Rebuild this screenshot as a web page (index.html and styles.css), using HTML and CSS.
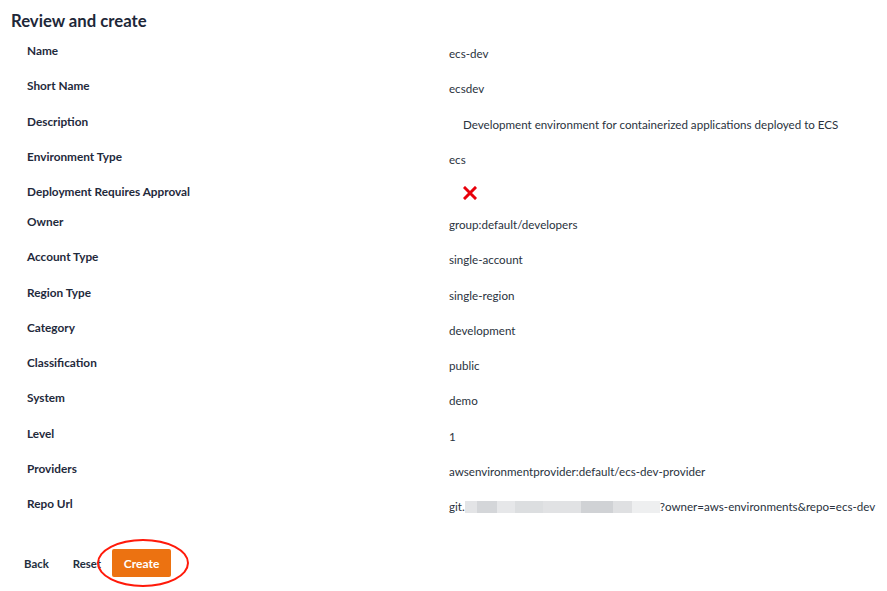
FILE: index.html
```html
<!DOCTYPE html>
<html lang="en">
<head>
<meta charset="utf-8">
<title>Review and create</title>
<link rel="stylesheet" href="styles.css">
</head>
<body>
<div class="page">
  <h1 class="title">Review and create</h1>
  <div class="review">
    <div class="row"><div class="label">Name</div><div class="value">ecs-dev</div></div>
    <div class="row"><div class="label">Short Name</div><div class="value">ecsdev</div></div>
    <div class="row"><div class="label">Description</div><div class="value indent">Development environment for containerized applications deployed to ECS</div></div>
    <div class="row"><div class="label">Environment Type</div><div class="value">ecs</div></div>
    <div class="row short"><div class="label">Deployment Requires Approval</div><div class="value indent icon-cell"><svg class="cross" width="14" height="14" viewBox="0 0 14 14"><path d="M2 2 L12 12 M12 2 L2 12" stroke="#e8000b" stroke-width="3" stroke-linecap="square"/></svg></div></div>
    <div class="row"><div class="label">Owner</div><div class="value">group:default/developers</div></div>
    <div class="row"><div class="label">Account Type</div><div class="value">single-account</div></div>
    <div class="row"><div class="label">Region Type</div><div class="value">single-region</div></div>
    <div class="row"><div class="label">Category</div><div class="value">development</div></div>
    <div class="row"><div class="label">Classification</div><div class="value">public</div></div>
    <div class="row"><div class="label">System</div><div class="value">demo</div></div>
    <div class="row"><div class="label">Level</div><div class="value">1</div></div>
    <div class="row"><div class="label">Providers</div><div class="value">awsenvironmentprovider:default/ecs-dev-provider</div></div>
    <div class="row"><div class="label">Repo Url</div><div class="value repo">git.<span class="blur"><span class="b1"></span><span class="b2"></span><span class="b3"></span><span class="b4"></span><span class="b5"></span><span class="b6"></span><span class="b7"></span><span class="b8"></span></span>?owner=aws-environments&amp;repo=ecs-dev</div></div>
  </div>
  <div class="actions">
    <button class="btn-text">Back</button>
    <button class="btn-text">Reset</button>
    <span class="create-wrap">
      <button class="btn-primary">Create</button>
      <span class="annotation"></span>
    </span>
  </div>
</div>
</body>
</html>
```

FILE: styles.css
```css
html, body {
  margin: 0;
  padding: 0;
  background: #ffffff;
}
body {
  font-family: Lato, "Noto Sans", sans-serif;
  color: #232f3e;
}
.page {
  width: 887px;
  height: 591px;
  overflow: hidden;
}
.title {
  margin: 0;
  padding: 11px 0 0 11px;
  font-size: 16.7px;
  line-height: 20px;
  font-weight: 700;
  color: #1d2738;
  height: 23px;
}
.review {
  display: flex;
  flex-direction: column;
}
.row {
  display: grid;
  grid-template-columns: 449px 1fr;
  height: 35.25px;
}
.row.short {
  height: 30px;
}
.label {
  padding: 9px 0 0 27px;
  font-size: 11.8px;
  line-height: 16px;
  font-weight: 700;
  color: #1f2a3c;
}
.value {
  padding-top: 12px;
  font-size: 11.6px;
  line-height: 16px;
  color: #2a3340;
  white-space: nowrap;
}
.value.indent {
  padding-left: 14px;
}
.icon-cell {
  padding-top: 11px;
  line-height: 0;
}
.cross {
  display: block;
}
.blur {
  display: inline-flex;
  vertical-align: middle;
  height: 12px;
  margin-top: -2px;
}
.blur span {
  display: block;
  height: 12px;
}
.b1 { width: 12px; background: #e3e4e6; }
.b2 { width: 20px; background: #d4d6d9; }
.b3 { width: 18px; background: #e6e7e9; }
.b4 { width: 28px; background: #dcdee0; }
.b5 { width: 38px; background: #e1e2e4; }
.b6 { width: 32px; background: #d0d2d5; }
.b7 { width: 19px; background: #dfe0e2; }
.b8 { width: 28px; background: #eeeff0; }
.actions {
  display: flex;
  align-items: center;
  padding: 27px 0 0 16px;
}
.btn-text {
  font-family: inherit;
  border: none;
  background: transparent;
  font-size: 11.4px;
  font-weight: 700;
  color: #232f3e;
  padding: 0 8px;
  height: 28px;
  margin-right: 8px;
  cursor: pointer;
}
.create-wrap {
  position: relative;
  display: inline-block;
  margin-left: -5px;
}
.btn-primary {
  font-family: inherit;
  display: block;
  border: none;
  border-radius: 2px;
  background: #ec7211;
  color: #ffffff;
  font-size: 12px;
  font-weight: 700;
  width: 59px;
  height: 28px;
  padding: 0;
}
.annotation {
  position: absolute;
  left: -15px;
  top: -10px;
  width: 88px;
  height: 44px;
  border: 2px solid #ff1a0a;
  border-radius: 50%;
  pointer-events: none;
}
```
